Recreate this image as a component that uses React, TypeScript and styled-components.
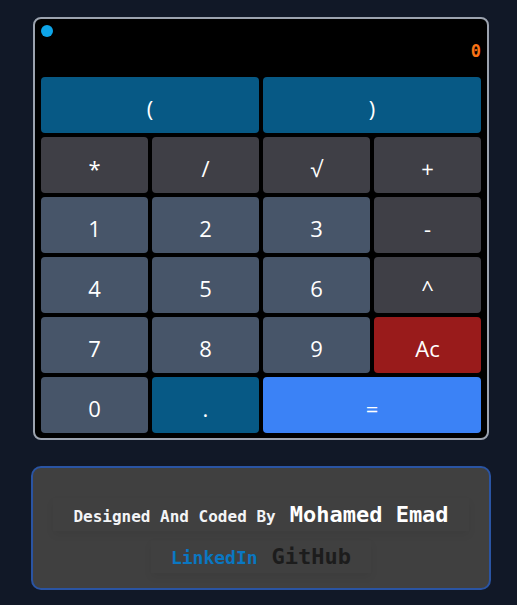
import React, { FC } from 'react';
import styled, { createGlobalStyle } from 'styled-components';

const GlobalStyle = createGlobalStyle`
  html, body {
    margin: 0;
    padding: 0;
    background: #111827;
  }
`;

type IVariant = 'paren' | 'op' | 'num' | 'clear' | 'equal';

const variantColors: Record<IVariant, string> = {
  paren: '#075985',
  op: '#3f3f46',
  num: '#475569',
  clear: '#991b1b',
  equal: '#3b82f6',
};

const Page = styled('div')`
  display: flex;
  flex-direction: column;
  align-items: flex-start;
  padding: 17px 0 0 31px;
  gap: 26px;
  min-height: 605px;
  box-sizing: border-box;
`;

const Calculator = styled('div')`
  margin-left: 2px;
  width: 456px;
  box-sizing: border-box;
  background: #000000;
  border: 2px solid #9ca3af;
  border-radius: 8px;
  padding: 6px 6px 5px 6px;
  display: flex;
  flex-direction: column;
  gap: 4px;
`;

const Display = styled('div')`
  position: relative;
  height: 48px;
  display: flex;
  align-items: center;
  justify-content: flex-end;
`;

const Dot = styled('span')`
  position: absolute;
  top: 0;
  left: 0;
  width: 12px;
  height: 12px;
  border-radius: 50%;
  background: #0ea5e9;
`;

const Result = styled('span')`
  font-family: 'DejaVu Sans Mono', monospace;
  font-weight: bold;
  font-size: 17px;
  color: #f97316;
  padding-top: 3px;
`;

const Keys = styled('div')`
  display: grid;
  grid-template-columns: repeat(4, 107px);
  grid-auto-rows: 56px;
  gap: 4px;
`;

const Key = styled('button')<{ variant: IVariant; span?: number }>`
  grid-column: span ${props => props.span || 1};
  border: none;
  border-radius: 4px;
  background: ${props => variantColors[props.variant]};
  color: #ffffff;
  font-family: 'Open Sans', 'Noto Sans', sans-serif;
  font-size: 22px;
  padding: 5px 0 0 0;
  cursor: pointer;
`;

const Credits = styled('div')`
  width: 460px;
  height: 124px;
  box-sizing: border-box;
  background: #404040;
  border: 2px solid #2a54a3;
  border-radius: 10px;
  display: flex;
  flex-direction: column;
  align-items: center;
  justify-content: center;
  gap: 9px;
  padding-top: 14px;
  font-family: 'DejaVu Sans Mono', monospace;
  font-weight: bold;
`;

const Line = styled('div')`
  display: flex;
  align-items: baseline;
  gap: 14px;
  padding: 4px 20px;
  box-shadow: 0 4px 8px rgba(0, 0, 0, 0.06);
`;

const Small = styled('span')`
  font-size: 16px;
  color: #f3f4f6;
`;

const Name = styled('span')`
  font-size: 22px;
  color: #ffffff;
`;

const Social = styled('a')<{ size: number; color: string }>`
  font-size: ${props => props.size}px;
  color: ${props => props.color};
  text-decoration: none;
`;

const keys: { label: string; variant: IVariant; span?: number }[] = [
  { label: '(', variant: 'paren', span: 2 },
  { label: ')', variant: 'paren', span: 2 },
  { label: '*', variant: 'op' },
  { label: '/', variant: 'op' },
  { label: '√', variant: 'op' },
  { label: '+', variant: 'op' },
  { label: '1', variant: 'num' },
  { label: '2', variant: 'num' },
  { label: '3', variant: 'num' },
  { label: '-', variant: 'op' },
  { label: '4', variant: 'num' },
  { label: '5', variant: 'num' },
  { label: '6', variant: 'num' },
  { label: '^', variant: 'op' },
  { label: '7', variant: 'num' },
  { label: '8', variant: 'num' },
  { label: '9', variant: 'num' },
  { label: 'Ac', variant: 'clear' },
  { label: '0', variant: 'num' },
  { label: '.', variant: 'paren' },
  { label: '=', variant: 'equal', span: 2 },
];

const App: FC = () => {
  return (
    <Page>
      <GlobalStyle />
      <Calculator>
        <Display>
          <Dot />
          <Result>0</Result>
        </Display>
        <Keys>
          {keys.map((k, i) => (
            <Key key={i} variant={k.variant} span={k.span}>
              {k.label}
            </Key>
          ))}
        </Keys>
      </Calculator>
      <Credits>
        <Line>
          <Small>Designed And Coded By</Small>
          <Name>Mohamed Emad</Name>
        </Line>
        <Line>
          <Social size={18} color="#0a77c2" href="#">
            LinkedIn
          </Social>
          <Social size={22} color="#1c1c1c" href="#">
            GitHub
          </Social>
        </Line>
      </Credits>
    </Page>
  );
};

export default App;
